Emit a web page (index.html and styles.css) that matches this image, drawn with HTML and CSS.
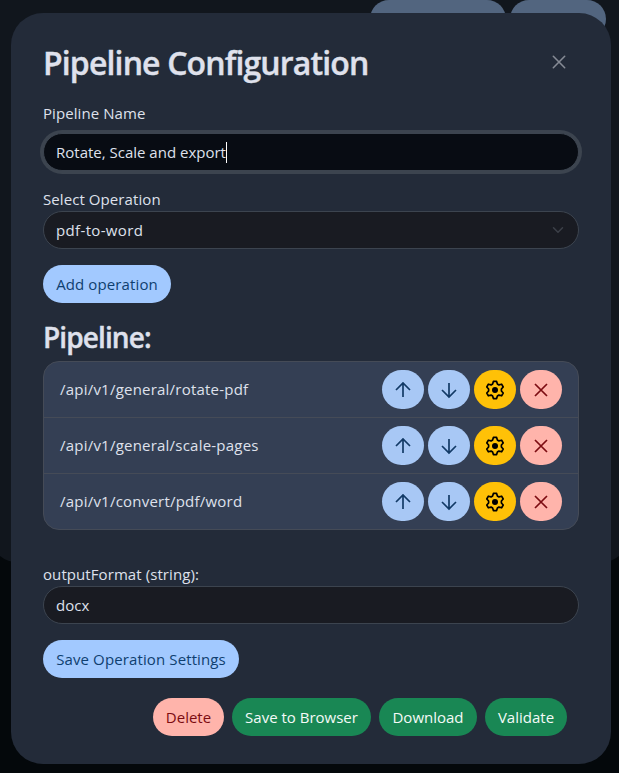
FILE: index.html
```html
<!DOCTYPE html>
<html lang="en">
<head>
    <meta charset="UTF-8">
    <meta name="viewport" content="width=device-width, initial-scale=1.0">
    <title>Pipeline</title>
    <link rel="stylesheet" href="styles.css">
</head>
<body>
    <!-- icons used by the pipeline rows -->
    <svg class="sprite">
        <symbol id="icon-up" viewBox="0 0 24 24"><path d="M12 19V5.2M5 12l7-7 7 7"/></symbol>
        <symbol id="icon-down" viewBox="0 0 24 24"><path d="M12 5v13.8M5 12l7 7 7-7"/></symbol>
        <symbol id="icon-close" viewBox="0 0 24 24"><path d="M6 6l12 12M18 6L6 18"/></symbol>
        <symbol id="icon-gear" viewBox="-12 -12 24 24">
            <path d="M-1.6-8.6H1.6L2.4-6L3.9-5.1L6.6-5.8L8.2-3L6.4-1V1L8.2 3L6.6 5.8L3.9 5.1L2.4 6L1.6 8.6H-1.6L-2.4 6L-3.9 5.1L-6.6 5.8L-8.2 3L-6.4 1V-1L-8.2-3L-6.6-5.8L-3.9-5.1L-2.4-6Z"/>
            <circle r="3" fill="currentColor" stroke="none"/>
        </symbol>
    </svg>

    <div class="page-card">
        <div class="page-btn page-btn-wide"></div>
        <div class="page-btn"></div>
    </div>

    <div class="modal">
        <div class="modal-header">
            <h2 class="modal-title">Pipeline Configuration</h2>
            <button class="btn-close" aria-label="Close"><svg viewBox="0 0 16 16"><path d="M1.5 1.5l13 13M14.5 1.5l-13 13"/></svg></button>
        </div>
        <div class="modal-body">
            <label class="label label-name">Pipeline Name</label>
            <div class="form-control focused"><span class="value-name">Rotate, Scale and export</span><span class="caret"></span></div>

            <label class="label label-op">Select Operation</label>
            <div class="form-control select">
                <span class="value-op">pdf-to-word</span>
                <svg class="chevron" viewBox="0 0 16 16"><path d="m2 5 6 6 6-6"/></svg>
            </div>

            <button class="btn btn-primary btn-add">Add operation</button>

            <h3 class="pipeline-title">Pipeline:</h3>
            <ol class="pipeline-list">
                <li class="pipeline-item">
                    <span class="path">/api/v1/general/rotate-pdf</span>
                    <div class="actions">
                        <button class="icon-btn move"><svg><use href="#icon-up"/></svg></button>
                        <button class="icon-btn move"><svg><use href="#icon-down"/></svg></button>
                        <button class="icon-btn settings"><svg><use href="#icon-gear"/></svg></button>
                        <button class="icon-btn remove"><svg><use href="#icon-close"/></svg></button>
                    </div>
                </li>
                <li class="pipeline-item">
                    <span class="path">/api/v1/general/scale-pages</span>
                    <div class="actions">
                        <button class="icon-btn move"><svg><use href="#icon-up"/></svg></button>
                        <button class="icon-btn move"><svg><use href="#icon-down"/></svg></button>
                        <button class="icon-btn settings"><svg><use href="#icon-gear"/></svg></button>
                        <button class="icon-btn remove"><svg><use href="#icon-close"/></svg></button>
                    </div>
                </li>
                <li class="pipeline-item">
                    <span class="path">/api/v1/convert/pdf/word</span>
                    <div class="actions">
                        <button class="icon-btn move"><svg><use href="#icon-up"/></svg></button>
                        <button class="icon-btn move"><svg><use href="#icon-down"/></svg></button>
                        <button class="icon-btn settings"><svg><use href="#icon-gear"/></svg></button>
                        <button class="icon-btn remove"><svg><use href="#icon-close"/></svg></button>
                    </div>
                </li>
            </ol>

            <label class="label label-format">outputFormat (string):</label>
            <div class="form-control"><span>docx</span></div>
            <button class="btn btn-primary btn-save">Save Operation Settings</button>
        </div>
        <div class="modal-footer">
            <button class="btn btn-danger">Delete</button>
            <button class="btn btn-success btn-browser">Save to Browser</button>
            <button class="btn btn-success btn-download">Download</button>
            <button class="btn btn-success btn-validate">Validate</button>
        </div>
    </div>
</body>
</html>
```

FILE: styles.css
```css
* { box-sizing: border-box; }
body, html { margin: 0; padding: 0; height: 100%; overflow: hidden; }
body {
    background: #04080b;
    color: #dfe1ec;
    font: 15px/24px "Open Sans", "Noto Sans", sans-serif;
}
button { font: inherit; border: 0; padding: 0; cursor: pointer; white-space: nowrap; }
svg { display: block; fill: none; stroke: currentColor; }
.sprite { display: none; }

/* page behind the dialog */
.page-card {
    display: flex; justify-content: flex-end; align-items: flex-start; gap: 4px;
    height: 563px; margin: 0 -12px; padding-right: 25px;
    background: #11161d; border-radius: 0 0 32px 32px;
}
.page-btn { width: 96px; height: 38px; border-radius: 19px; background: #52657f; }
.page-btn-wide { width: 136px; }

.modal {
    position: absolute; top: 13px; left: 11px; width: 600px; height: 751px;
    padding: 32px; border-radius: 32px; background: #232b39;
}
.modal-header { display: flex; align-items: center; justify-content: space-between; height: 36px; padding-right: 13px; }
.modal-title { margin: 0; font-size: 32px; line-height: 36px; font-weight: 650; letter-spacing: -0.86px; -webkit-text-stroke: 0.4px; white-space: nowrap; }
.btn-close { width: 14px; height: 14px; margin-top: -3px; background: none; color: #868b95; }
.btn-close svg { width: 14px; height: 14px; stroke-width: 1.8; stroke-linecap: round; }

.modal-body { display: flex; flex-direction: column; align-items: flex-start; padding-top: 20px; }
.label { height: 24px; white-space: nowrap; letter-spacing: 0.08px; }
.label-name { margin-bottom: 8px; }
.label-op { margin-top: 16px; }
.form-control {
    display: flex; align-items: center; width: 100%; height: 38px; padding: 0 12px;
    border: 1px solid #3c444f; border-radius: 19px; background: #191b22;
}
.form-control.focused { background: #080c13; box-shadow: 0 0 0 3px #3c444f; }
.caret { width: 1px; height: 21px; background: #fff; }
.value-op { letter-spacing: 0.35px; }
.select { justify-content: space-between; padding-right: 14px; }
.chevron { width: 12px; height: 12px; stroke: #3c4049; stroke-width: 2; stroke-linecap: round; stroke-linejoin: round; }

.btn { height: 38px; border-radius: 19px; text-align: center; }
.btn-primary { background: #a2c9ff; color: #0f3f70; letter-spacing: 0.12px; }
.btn-add { width: 128px; margin-top: 16px; }
.btn-save { width: 196px; margin-top: 16px; }
.btn-danger { width: 71px; background: #ffb4ab; color: #7c0c12; }
.btn-success { background: #198754; color: #f4faf7; }
.btn-browser { width: 139px; }
.btn-download { width: 98px; }
.btn-validate { width: 82px; }

.pipeline-title { margin: 17px 0 7px; font-size: 28px; line-height: 34px; font-weight: 650; letter-spacing: -0.9px; -webkit-text-stroke: 0.4px; }
.pipeline-list {
    width: 100%; margin: 0; padding: 0; list-style: none;
    border: 1px solid #454b57; border-radius: 16px; background: #343f54; overflow: hidden;
}
.pipeline-item { display: flex; align-items: center; justify-content: space-between; height: 56px; padding: 0 16px; }
.pipeline-item + .pipeline-item { border-top: 1px solid #454b57; }
.pipeline-item:first-child { height: 55px; }
.path { padding-bottom: 2px; letter-spacing: 0.22px; }
.actions { display: flex; gap: 4px; }
.icon-btn { display: flex; align-items: center; justify-content: center; width: 42px; height: 39px; border-radius: 20px; }
.icon-btn svg { width: 24px; height: 24px; stroke-width: 1.7; }
.move { background: #a8c8f5; color: #123a66; }
.settings { background: #ffc107; color: #000; }
.settings svg { stroke-width: 1.7; stroke-linejoin: round; }
.remove { background: #ffb4ab; color: #7c0c12; }

.label-format { margin-top: 32px; }
.modal-footer { display: flex; justify-content: flex-end; gap: 8px; padding: 20px 12px 0 0; }
```
